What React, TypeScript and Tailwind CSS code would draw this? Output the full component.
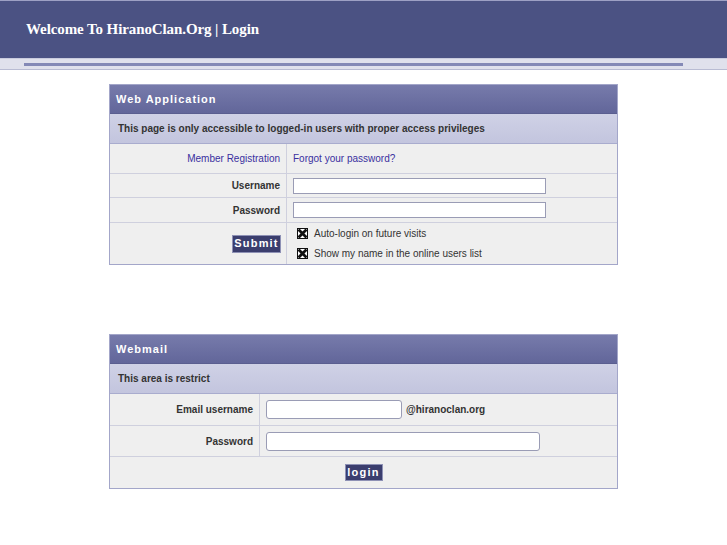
import React from "react";

const sans = "font-['Liberation_Sans',Arial,sans-serif]";

const Check = () => (
  <svg width="11" height="11" viewBox="0 0 11 11" className="shrink-0">
    <rect x="0.5" y="0.5" width="10" height="10" fill="#fff" stroke="#111" />
    <path d="M2.5 2.5 L8.5 8.5 M8.5 2.5 L2.5 8.5" stroke="#111" strokeWidth="2.8" strokeLinecap="square" />
  </svg>
);

const PanelTitle = ({ text }: { text: string }) => (
  <div className="h-[29px] flex items-center pl-[6px] bg-gradient-to-b from-[#777bab] to-[#62669a] border-b border-[#5a5e90]">
    <span className="text-white text-[11px] font-bold tracking-[1px]">{text}</span>
  </div>
);

const PanelNote = ({ text }: { text: string }) => (
  <div className="h-[30px] flex items-center pl-[8px] bg-gradient-to-b from-[#cfd1e6] to-[#c3c5de] border-b border-[#a9acce]">
    <span className="text-[#333] text-[10px] font-bold">{text}</span>
  </div>
);

const Button = ({ label, className }: { label: string; className: string }) => (
  <button
    type="button"
    className={`bg-[#3b3e6e] text-white text-[11px] font-bold tracking-[1.2px] border border-[#8e91b5] ${className}`}
  >
    {label}
  </button>
);

export default function App() {
  return (
    <div className={`min-h-[545px] bg-white ${sans}`}>
      {/* header */}
      <div className="h-[58px] bg-[#4b5283] border-t border-[#9da0c4] flex items-center pl-[26px]">
        <h1 className="text-white text-[15px] font-bold font-['Liberation_Serif','Times_New_Roman',serif] tracking-[-0.1px]">
          Welcome To HiranoClan.Org | Login
        </h1>
      </div>
      <div className="h-[12px] bg-[#e0e1ec] border-t border-[#c9cbdd] border-b border-b-[#b9bcd3] flex items-center pl-[24px] pr-[44px]">
        <div className="h-[3px] w-full bg-[#8489b6]" />
      </div>

      {/* web application */}
      <div className="mt-[14px] mx-auto w-[509px] border border-[#a3a6c9] bg-[#efefef]">
        <PanelTitle text="Web Application" />
        <PanelNote text="This page is only accessible to logged-in users with proper access privileges" />
        <div className="grid grid-cols-[177px_1fr] text-[10px]">
          <div className="h-[30px] flex items-center justify-end pr-[6px] border-r border-b border-[#cfd0de] text-[#3a2fa0]">
            Member Registration
          </div>
          <div className="h-[30px] flex items-center pl-[6px] border-b border-[#cfd0de] text-[#3a2fa0]">
            Forgot your password?
          </div>

          <div className="h-[24px] flex items-center justify-end pr-[6px] border-r border-b border-[#cfd0de] font-bold text-[#333]">
            Username
          </div>
          <div className="h-[24px] flex items-center pl-[6px] border-b border-[#cfd0de]">
            <input className="w-[253px] h-[16px] bg-white border border-[#9a9cb5]" />
          </div>

          <div className="h-[25px] flex items-center justify-end pr-[6px] border-r border-b border-[#cfd0de] font-bold text-[#333]">
            Password
          </div>
          <div className="h-[25px] flex items-center pl-[6px] border-b border-[#cfd0de]">
            <input type="password" className="w-[253px] h-[16px] bg-white border border-[#9a9cb5]" />
          </div>

          <div className="h-[41px] flex items-center justify-end pr-[5px] border-r border-[#cfd0de]">
            <Button label="Submit" className="w-[49px] h-[18px] leading-none" />
          </div>
          <div className="h-[41px] flex flex-col justify-center gap-[5px] pl-[10px] text-[#333]">
            <label className="flex items-center gap-[6px]">
              <Check />
              Auto-login on future visits
            </label>
            <label className="flex items-center gap-[6px]">
              <Check />
              Show my name in the online users list
            </label>
          </div>
        </div>
      </div>

      {/* webmail */}
      <div className="mt-[69px] mx-auto w-[509px] border border-[#a3a6c9] bg-[#efefef]">
        <PanelTitle text="Webmail" />
        <PanelNote text="This area is restrict" />
        <div className="grid grid-cols-[150px_1fr] text-[10px]">
          <div className="h-[32px] flex items-center justify-end pr-[6px] border-r border-b border-[#cfd0de] font-bold text-[#333]">
            Email username
          </div>
          <div className="h-[32px] flex items-center pl-[6px] border-b border-[#cfd0de] gap-[4px]">
            <input className="w-[136px] h-[19px] bg-white border border-[#9a9cb5] rounded-[3px]" />
            <span className="font-bold text-[#333]">@hiranoclan.org</span>
          </div>

          <div className="h-[31px] flex items-center justify-end pr-[6px] border-r border-b border-[#cfd0de] font-bold text-[#333]">
            Password
          </div>
          <div className="h-[31px] flex items-center pl-[6px] border-b border-[#cfd0de]">
            <input type="password" className="w-[274px] h-[19px] bg-white border border-[#9a9cb5] rounded-[3px]" />
          </div>

          <div className="col-span-2 h-[31px] flex items-center justify-center">
            <Button label="login" className="w-[38px] h-[17px] leading-none" />
          </div>
        </div>
      </div>
    </div>
  );
}
